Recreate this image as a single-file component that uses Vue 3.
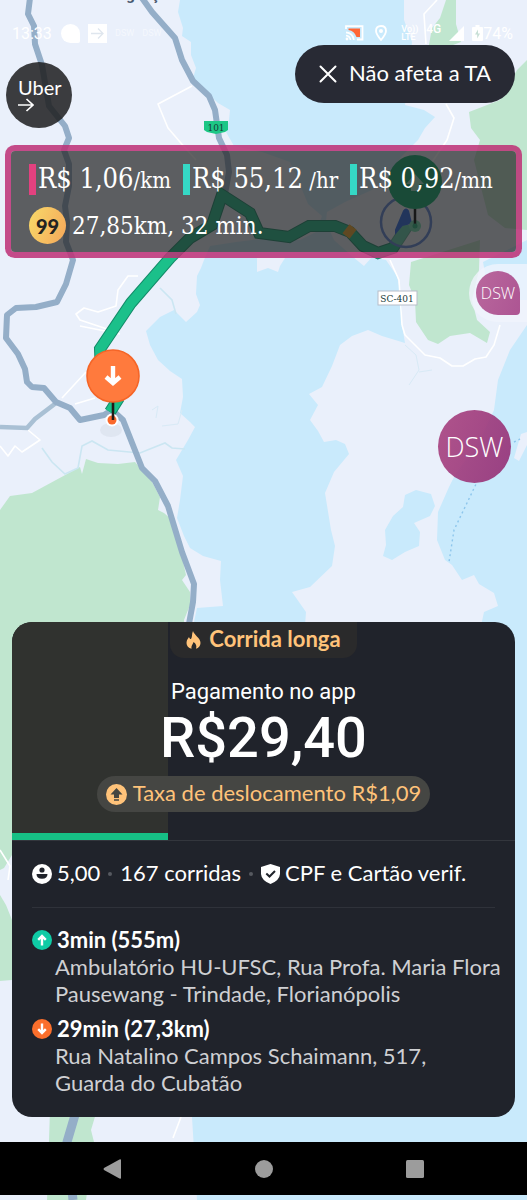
<template>
  <div class="screen">
    <svg class="map" viewBox="0 0 527 1200" preserveAspectRatio="xMidYMin slice" aria-hidden="true">
      <rect width="527" height="1200" fill="#c9eafc" />
      <!-- mainland -->
      <path
        fill="#eaf0fb"
        d="M0 0H180L178 12L183 28L182 36L191 42L191 55L196 68L193 78L206 92L218 103L230 110L229 120L226 132L234 146L262 152L290 162L298 180L308 204L322 216L316 232L300 240L268 238L236 242L210 246L204 260L201 268L197 276L196 294L200 305L197 312L186 322L174 310L160 317L146 331L150 345L158 360L170 371L182 379L183 397L180 413L190 422L195 427L188 440L176 460L183 476L180 500L177 518L184 536L190 548L203 556L221 561L220 580L223 606L197 608L190 640L195 900L192 1117L197 1200H0Z"
      />
      <path fill="#eaf0fb" d="M257 258H285L280 266L278 272L268 268L257 272Z" />
      <!-- island -->
      <path
        fill="#eaf0fb"
        d="M404 0H527V325L510 350L498 380L494 410L480 440L455 475L449 487L438 512L437 540L445 560L452 565L462 580L474 575L479 584L494 593L498 606L484 612L478 640H304L306 612L292 592L310 587L332 566L335 546L331 530L325 493L334 472L349 454L345 444L336 440L324 442L318 431L310 420L318 405L309 394L322 387L332 366L340 345L352 336L368 330L382 336L405 343L402 325L402 300L397 276L386 260L372 257L364 266L353 257L334 240L326 222L327 212L345 202L372 190L390 172L402 156L418 140L425 128L435 117L424 110L405 105L412 42L404 20Z"
      />
      <path fill="#c9eafc" d="M405 495L416 490L431 494L435 506L430 516L414 523L420 532L419 546L405 552L392 560L383 556L386 545L385 530L393 516L403 507Z" />
      <path fill="#c9eafc" d="M483 262L527 240V300H490Z" />
      <path fill="#eaf0fb" d="M521 434L527 432V445L519 461L514 458Z" />
      <!-- woods -->
      <g fill="#c0e6cf">
        <path d="M446 0H456V24L461 42L440 50H428L432 28L440 18Z" />
        <path d="M527 60V135L527 230L505 228L488 215L474 160L480 140L471 128L469 112L500 100L517 70Z" />
        <path d="M411 262L480 240L479 270L472 300L477 320L490 332L487 343L470 333L450 336L438 344L428 340L416 322L415 300L409 285Z" />
        <path d="M0 510L10 496L32 493L56 480L80 467L82 474L86 459L98 463L118 464L135 462L142 470L152 482L160 497L158 510L164 513L172 520L180 548L186 575L182 580L190 592L190 605L184 620L184 700L0 860Z" />
        <path d="M0 845L12 845V855L4 868L0 870Z" />
        <path d="M0 895L6 905L12 920V980L0 981Z" />
        <path d="M50 1110H97L91 1130L94 1142L86 1200H47Z" />
      </g>
      <!-- minor roads and streams -->
      <g fill="none" stroke="#fff" stroke-width="1.6" stroke-linejoin="round">
        <path d="M192 86L158 104L168 128L180 142L196 160" />
        <path d="M437 0L424 14L426 44M446 104L454 118L447 140L430 165M402 325L405 335L425 355L440 358L452 366L463 366L475 359L486 357L494 345L500 325" />
        <path d="M138 276L128 276L118 290L116 306L98 312L84 308L76 314L80 320L110 330M80 326L120 334" />
        <path d="M86 372L62 398M95 398L75 404M28 430L40 440L22 452L15 446L8 456L0 446" />
        <path d="M390 260L399 280L402 325M0 850L10 866L8 880M181 1117L173 1138" />
      </g>
      <g fill="none" stroke="#cbe6f2" stroke-width="1.6">
        <path d="M42 448L52 462L65 474L78 468L82 446L92 441L108 450L140 453L165 443L172 448L185 449" />
        <path d="M160 288L172 300L176 314" />
      </g>
      <g fill="none" stroke="#d8eaf6" stroke-width="1">
        <path d="M152 410L158 406L156 418M162 426L178 424L182 410" />
        <path d="M405 345L416 355L419 370L409 385M419 372L432 370" />
      </g>
      <path d="M478 480L454 530L449 562M514 442L520 439" fill="none" stroke="#8dc6ec" stroke-width="1.4" stroke-dasharray="2 3" />
      <path d="M0 427L27 428L35 419L56 403" fill="none" stroke="#a9c0d4" stroke-width="4.5" />
      <!-- highways -->
      <g fill="none" stroke="#94aec8" stroke-width="6" stroke-linejoin="round">
        <path d="M30 -2L28 14L34 26L35 44L42 65L49 106L65 126L69 138L64 150L69 164L69 186L65 206L67 222L66 242L73 260L66 284L57 302L36 307L16 308L7 315L6 338L18 354L25 369L27 382L32 387L44 388L56 402L70 408L80 420L104 415L112 410L123 420L142 468L155 481L168 506L182 552L194 584L193 602L186 640" />
        <path d="M142 -2L152 12L175 38L182 60L193 81L209 96L215 110L219 138L227 155L229 172L225 194" />
        <path d="M75 1115L67 1142L73 1200" stroke-width="9" />
      </g>
      <!-- route -->
      <path d="M110 412L117 401L101 374L100 349L131 303L170 258L190 238L212 225L222 195L250 213L259 233L289 237L309 226L335 226L350 232L363 246L378 253L393 248L408 225" fill="none" stroke="#138a68" stroke-width="12" />
      <path d="M110 412L117 401L101 374L100 349L131 303L170 258L190 238L212 225L222 195L250 213L259 233L289 237L309 226L335 226L350 232L363 246L378 253L393 248L408 225" fill="none" stroke="#1bc08a" stroke-width="10" />
      <path d="M346 236L353 227" stroke="#f5a623" stroke-width="9" />
      <!-- driver position and pickup pin -->
      <circle cx="406" cy="222" r="25" fill="#fff" fill-opacity=".3" stroke="#5b82d8" stroke-width="2.5" />
      <path d="M404 211Q406 208 408 211L411 223L402 225L396 232L396 230Z" fill="#2364e8" stroke="#2364e8" stroke-width="2" />
      <circle cx="415" cy="226" r="6" fill="#6ee0af" />
      <path d="M415 200V226" stroke="#000" stroke-width="2.5" />
      <circle cx="415" cy="226" r="2.5" fill="#20b87c" />
      <circle cx="415" cy="182" r="27" fill="#06ad6c" />
      <path d="M415 174L424 184H419V191H411V184H406Z" fill="#9fe5c9" />
      <!-- drop-off pin -->
      <ellipse cx="111" cy="430" rx="11" ry="7" fill="#4e6074" opacity=".07" />
      <circle cx="112" cy="420" r="6.5" fill="#fff" />
      <circle cx="112" cy="420" r="4.5" fill="#fa682b" />
      <path d="M113 400V420" stroke="#231a18" stroke-width="2.6" />
      <circle cx="113" cy="376" r="26" fill="#ff7a3d" stroke="#f56527" stroke-width="1.6" />
      <path d="M113 366V382M106 377L113 383L120 377" fill="none" stroke="#fff" stroke-width="4.4" />
      <!-- labels -->
      <text x="140" y="0" class="city">Biguaçu</text>
      <path d="M204 121H228V130L225 132L216 134L207 132L204 130Z" fill="#1dc786" />
      <text x="216" y="131" class="shield">101</text>
      <rect x="378" y="291" width="39" height="14" fill="#fff" stroke="#b7bec9" />
      <text x="397" y="302" class="shield">SC-401</text>
    </svg>

    <header class="status">
      <time class="clock">13:33</time>
      <svg width="19" height="19" viewBox="0 0 19 19"><path d="M9.500 0A9.500 9.500 0 0 0 9.500 19H17Q19 19 19 17V9.500A9.500 9.500 0 0 0 9.500 0Z" fill="#fff" /></svg>
      <svg width="19" height="19" viewBox="0 0 19 19">
        <rect width="19" height="19" fill="#fff" />
        <path d="M3 9.500H15M10 4.500L15 9.500L10 14.500" fill="none" stroke="#dfe6ee" stroke-width="1.3" />
      </svg>
      <span class="faint">DSW</span>
      <span class="faint">DSW</span>
      <span class="grow"></span>
      <svg width="19" height="16" viewBox="0 0 19 16">
        <path d="M1 4V1.200H17.500V14.500H12" fill="none" stroke="#fff" stroke-width="1.800" />
        <path d="M3.500 3.500H15V12H11.500Q9.500 6 3.500 5Z" fill="#ff6736" />
        <path d="M1 7.300Q8 8 8.800 15M1 10.500Q5 11 5.500 15" fill="none" stroke="#fff" stroke-width="1.700" />
        <circle cx="2" cy="14" r="1.400" fill="#fff" />
      </svg>
      <svg class="place" width="12" height="16" viewBox="0 0 12 16">
        <path d="M6 1Q11 1 11 6Q11 9 6 15Q1 9 1 6Q1 1 6 1Z" fill="none" stroke="#fff" stroke-width="1.800" />
        <circle cx="6" cy="6" r="2" fill="#fff" />
      </svg>
      <span class="volte">Vo))<br />LTE</span>
      <span class="net">4G</span>
      <svg width="15" height="15" viewBox="0 0 15 15"><path d="M0 15L15 0V15Z" fill="#fff" /></svg>
      <svg width="11" height="16" viewBox="0 0 11 16">
        <path d="M1 2H3.500V0H7.500V2H10Q11 2 11 3V15Q11 16 10 16H1Q0 16 0 15V3Q0 2 1 2Z" fill="#fff" />
        <path d="M6 4.500L3 9.500H5.200V13.500L8 8.500H6Z" fill="#c8dfd6" />
      </svg>
      <span class="percent">74%</span>
    </header>

    <div class="topbar">
      <button class="uber" type="button">
        <span>Uber</span>
        <svg width="16" height="14" viewBox="0 0 16 14"><path d="M0 7H15M8.500 1L15 7L8.500 13" fill="none" stroke="#fff" stroke-width="1.700" /></svg>
      </button>
      <button class="dismiss" type="button">
        <svg width="18" height="18" viewBox="0 0 18 18"><path d="M1.500 1.500L16.500 16.500M16.500 1.500L1.500 16.500" stroke="#fff" stroke-width="2" stroke-linecap="round" /></svg>
        <span>Não afeta a TA</span>
      </button>
    </div>

    <section class="fares">
      <div class="rates">
        <p v-for="rate in rates" :key="rate.unit" class="rate" :class="rate.tone">
          <strong>{{ rate.value }}</strong><small>{{ rate.unit }}</small>
        </p>
      </div>
      <div class="trip">
        <span class="coin">99</span>
        <span>27,85km, 32 min.</span>
      </div>
    </section>

    <button class="bubble small" type="button"><span>DSW</span></button>
    <button class="bubble large" type="button">DSW</button>

    <main class="card">
      <section class="offer">
        <div class="progress" :style="{ width: progress + '%' }"></div>
        <p class="tag">
          <svg width="15" height="18" viewBox="0 0 15 18">
            <path d="M7 0C8 4 14.500 7 14.500 12C14.500 15 12.500 17 10 17.800C11 15 10 12.500 7.500 11C7 13.500 5 14 5.500 17.800C2.500 17 .500 15 .500 12C.500 9 2 7.500 3 6C3.500 7.500 4 8 5 8C6.500 6 5.500 3 7 0Z" fill="#ffc37a" />
          </svg>
          <span>Corrida longa</span>
        </p>
        <p class="method">Pagamento no app</p>
        <p class="price">R$29,40</p>
        <p class="fee">
          <svg width="21" height="21" viewBox="0 0 21 21">
            <circle cx="10.500" cy="10.500" r="10.500" fill="#ffc37a" />
            <path d="M10.500 4L16.500 10.500H13V14H8V10.500H4.500ZM8 15.200H13V16.800H8Z" fill="#454641" />
          </svg>
          <span>Taxa de deslocamento R$1,09</span>
        </p>
      </section>

      <section class="rider">
        <svg width="20" height="20" viewBox="0 0 20 20">
          <circle cx="10" cy="10" r="10" fill="#fff" />
          <circle cx="10" cy="6" r="2.600" fill="#20232b" />
          <path d="M4.500 10H15.500Q15.500 14.800 10 14.800Q4.500 14.800 4.500 10Z" fill="#20232b" />
        </svg>
        <span class="score">5,00</span>
        <i class="dot"></i>
        <span>167 corridas</span>
        <i class="dot"></i>
        <svg width="19" height="20" viewBox="0 0 19 20">
          <path d="M9.500 0L19 3V10Q18.500 16.500 9.500 20Q.500 16.500 0 10V3Z" fill="#fff" />
          <path d="M5.300 9.500L8.500 12.500L14 7" fill="none" stroke="#20232b" stroke-width="2" />
        </svg>
        <span class="verified">CPF e Cartão verif.</span>
      </section>

      <section class="stops">
        <article v-for="stop in stops" :key="stop.kind" class="stop">
          <h2>
            <svg width="20" height="20" viewBox="0 0 20 20">
              <circle cx="10" cy="10" r="10" :fill="stop.color" />
              <path :d="stop.arrow" fill="none" stroke="#fff" stroke-width="2.400" />
            </svg>
            {{ stop.eta }}
          </h2>
          <p>{{ stop.address }}</p>
        </article>
      </section>
    </main>

    <nav class="system">
      <button type="button" aria-label="Voltar">
        <svg width="18" height="20" viewBox="0 0 18 20"><path d="M18 1V19Q18 20 16.500 19.500L1 11Q0 10 1 9L16.500 .500Q18 0 18 1Z" fill="#9c9c9c" /></svg>
      </button>
      <button type="button" aria-label="Início">
        <svg width="18" height="18" viewBox="0 0 18 18"><circle cx="9" cy="9" r="9" fill="#9c9c9c" /></svg>
      </button>
      <button type="button" aria-label="Recentes">
        <svg width="18" height="18" viewBox="0 0 18 18"><rect width="18" height="18" rx="1.500" fill="#9c9c9c" /></svg>
      </button>
    </nav>
  </div>
</template>

<script setup>
import { ref } from "vue";

const progress = ref(31);

const rates = [
  { value: "R$ 1,06", unit: "/km", tone: "low" },
  { value: "R$ 55,12", unit: " /hr", tone: "good" },
  { value: "R$ 0,92", unit: "/mn", tone: "good" },
];

const stops = [
  {
    kind: "pickup",
    eta: "3min (555m)",
    address: "Ambulatório HU-UFSC, Rua Profa. Maria Flora\nPausewang - Trindade, Florianópolis",
    color: "#0fcba5",
    arrow: "M10 15.500V6M6.200 9.800L10 6L13.800 9.800",
  },
  {
    kind: "dropoff",
    eta: "29min (27,3km)",
    address: "Rua Natalino Campos Schaimann, 517,\nGuarda do Cubatão",
    color: "#fb6f2c",
    arrow: "M10 4.500V14M6.200 10.200L10 14L13.800 10.200",
  },
];
</script>

<style>
body {
  margin: 0;
}
</style>

<style scoped>
.screen {
  position: relative;
  display: flex;
  flex-direction: column;
  min-height: 100vh;
  overflow: hidden;
  box-sizing: border-box;
  padding-bottom: 5px;
  font-family: Lato, "Liberation Sans", sans-serif;
  color: #fff;
}
.screen > * {
  position: relative;
}
.screen > .map {
  position: absolute;
  inset: 0;
  width: 100%;
  height: 100%;
}
p,
h2 {
  margin: 0;
}
svg {
  flex: none;
}
button {
  padding: 0;
  border: 0;
  font-family: inherit;
  color: #fff;
  cursor: pointer;
}
.city {
  font: 700 15px Roboto, sans-serif;
  fill: #4a5a70;
  text-anchor: middle;
}
.shield {
  font: 10px "DejaVu Serif Condensed", "DejaVu Serif", serif;
  fill: #173a38;
  text-anchor: middle;
}

.status {
  display: flex;
  align-items: center;
  height: 22px;
  padding: 22px 14px 0 12px;
  gap: 8px;
  font-family: Roboto, sans-serif;
}
.clock {
  width: 41px;
  font-size: 16px;
}
.faint {
  font-size: 9px;
  opacity: 0.5;
}
.grow {
  flex: 1;
}
.place {
  margin-left: 3px;
}
.volte {
  margin-left: 6px;
  font-size: 9px;
  font-weight: 500;
  line-height: 8px;
}
.net {
  align-self: flex-start;
  font-size: 12px;
  font-weight: 500;
  line-height: 14px;
}
.percent {
  margin-left: -8px;
  font-size: 16px;
}

.topbar {
  display: flex;
  align-items: flex-start;
  justify-content: space-between;
  margin-top: 1px;
  padding: 0 12px 0 6px;
}
.uber {
  display: flex;
  flex-direction: column;
  align-items: flex-start;
  justify-content: center;
  width: 66px;
  height: 66px;
  margin-top: 17px;
  padding: 0 0 2px 12px;
  border-radius: 50%;
  background: rgba(30, 30, 32, 0.86);
  font-size: 20px;
  line-height: 22px;
}
.dismiss {
  display: flex;
  align-items: center;
  justify-content: center;
  gap: 12px;
  width: 220px;
  height: 58px;
  border-radius: 29px;
  background: #282a34;
  font-size: 22px;
}
.dismiss span,
.tag span,
.fee span {
  padding-bottom: 4px;
}

.fares {
  margin: 23px 11px 0;
  padding: 8px 12px 0 18px;
  border-radius: 4px;
  background: rgba(34, 34, 34, 0.71);
  box-shadow: 0 0 0 6px rgba(190, 48, 118, 0.86);
  font-family: "DejaVu Serif Condensed", "DejaVu Serif", serif;
}
.rates {
  display: flex;
  gap: 12px;
  height: 40px;
  align-items: center;
}
.rate {
  display: flex;
  align-items: baseline;
  padding-left: 2px;
  border-left: 7px solid #35d8c5;
  font-size: 27px;
  line-height: 29px;
  white-space: pre;
}
.rate.low {
  border-color: #e3417f;
}
.rate strong {
  font-weight: 400;
}
.rate small {
  font-size: 22px;
}
.trip {
  display: flex;
  align-items: center;
  gap: 6px;
  height: 53px;
  font-size: 24px;
}
.coin {
  display: flex;
  align-items: center;
  justify-content: center;
  width: 37px;
  height: 37px;
  border-radius: 50%;
  background: linear-gradient(110deg, #f8da69, #f5a75a);
  color: #222;
  font: 900 20px Lato, sans-serif;
}

.screen > .bubble {
  position: absolute;
  background: linear-gradient(110deg, rgba(170, 70, 130, 0.92), rgba(148, 50, 120, 0.92));
  font-family: "Open Sans", sans-serif;
  font-weight: 300;
}
.screen > .small {
  top: 264px;
  right: 0;
  padding: 7px;
  border-radius: 29px 0 0 29px;
  background: rgba(240, 244, 252, 0.8);
  font-size: 16px;
}
.small span {
  display: grid;
  place-items: center;
  width: 44px;
  height: 44px;
  border-radius: 22px 22px 4px 22px;
  background: linear-gradient(110deg, #b9689d, #ad5593);
}
.large {
  top: 410px;
  right: 16px;
  width: 73px;
  height: 73px;
  border-radius: 50%;
  font-size: 27px;
}

.card {
  margin: auto 12px 25px;
  border-radius: 20px;
  overflow: hidden;
  background: #20232b;
}
.offer {
  position: relative;
  display: flex;
  flex-direction: column;
  align-items: center;
  height: 218px;
  border-bottom: 1px solid #33363d;
}
.offer > * {
  position: relative;
}
.offer > .progress {
  position: absolute;
  inset: 0 auto 0 0;
  box-sizing: border-box;
  border-bottom: 7px solid #16c085;
  background: #30322f;
}
.tag {
  display: flex;
  align-items: center;
  gap: 8px;
  height: 36px;
  padding: 0 16px;
  border-radius: 0 0 14px 14px;
  background: #2a2a2b;
  color: #ffc37a;
  font-size: 22px;
  font-weight: 700;
}
.method {
  margin-top: 21px;
  font-family: Roboto, sans-serif;
  font-size: 22px;
  line-height: 26px;
}
.price {
  font-family: Roboto, sans-serif;
  font-size: 56px;
  font-weight: 500;
  line-height: 66px;
}
.fee {
  display: flex;
  align-items: center;
  gap: 6px;
  height: 36px;
  margin-top: 5px;
  padding: 0 9px;
  border-radius: 18px;
  background: #454643;
  color: #ffc37a;
  font-size: 22px;
}
.rider {
  display: flex;
  align-items: center;
  height: 66px;
  margin: 0 20px;
  border-bottom: 1px solid #2f323a;
  font-size: 22px;
  white-space: nowrap;
}
.rider span {
  padding-bottom: 4px;
}
.score,
.verified {
  margin-left: 5px;
}
.dot {
  width: 4px;
  height: 4px;
  margin: 0 8px;
  border-radius: 50%;
  background: #565960;
}
.stops {
  padding: 18px 12px 21px 20px;
}
.stop {
  margin-bottom: 8px;
}
.stop:last-child {
  margin-bottom: 0;
}
.stop h2 {
  display: flex;
  align-items: center;
  gap: 5px;
  font-size: 22px;
  line-height: 27px;
}
.stop p {
  padding-left: 23px;
  color: #cfd0d3;
  font-size: 22px;
  line-height: 27px;
  white-space: pre-line;
}

.system {
  display: flex;
  align-items: center;
  height: 53px;
  padding: 0 36px;
  background: #000;
}
.system button {
  display: flex;
  flex: 1;
  align-items: center;
  justify-content: center;
  background: none;
}
</style>
